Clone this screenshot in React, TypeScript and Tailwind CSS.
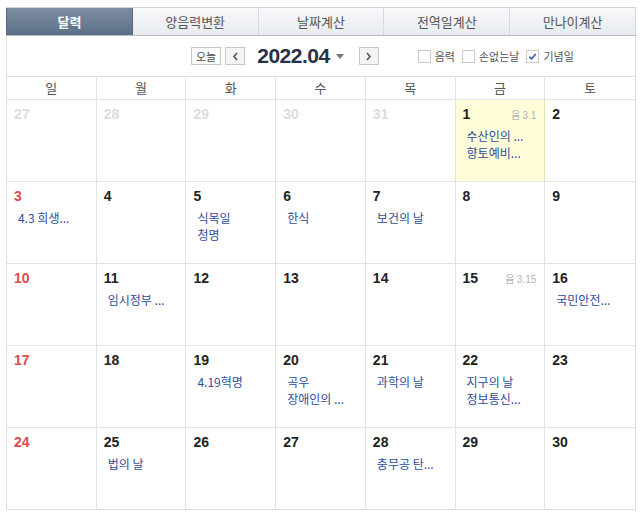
import React from "react";

type Day = {
  n: number;
  muted?: boolean;
  red?: boolean;
  today?: boolean;
  lunar?: string;
  events?: string[];
};

const tabs = ["달력", "양음력변환", "날짜계산", "전역일계산", "만나이계산"];
const weekdays = ["일", "월", "화", "수", "목", "금", "토"];

const weeks: Day[][] = [
  [
    { n: 27, muted: true },
    { n: 28, muted: true },
    { n: 29, muted: true },
    { n: 30, muted: true },
    { n: 31, muted: true },
    { n: 1, today: true, lunar: "3.1", events: ["수산인의 ...", "향토예비..."] },
    { n: 2 },
  ],
  [
    { n: 3, red: true, events: ["4.3 희생..."] },
    { n: 4 },
    { n: 5, events: ["식목일", "청명"] },
    { n: 6, events: ["한식"] },
    { n: 7, events: ["보건의 날"] },
    { n: 8 },
    { n: 9 },
  ],
  [
    { n: 10, red: true },
    { n: 11, events: ["임시정부 ..."] },
    { n: 12 },
    { n: 13 },
    { n: 14 },
    { n: 15, lunar: "3.15" },
    { n: 16, events: ["국민안전..."] },
  ],
  [
    { n: 17, red: true },
    { n: 18 },
    { n: 19, events: ["4.19혁명"] },
    { n: 20, events: ["곡우", "장애인의 ..."] },
    { n: 21, events: ["과학의 날"] },
    { n: 22, events: ["지구의 날", "정보통신..."] },
    { n: 23 },
  ],
  [
    { n: 24, red: true },
    { n: 25, events: ["법의 날"] },
    { n: 26 },
    { n: 27 },
    { n: 28, events: ["충무공 탄..."] },
    { n: 29 },
    { n: 30 },
  ],
];

const kr = { fontFamily: '"Noto Sans CJK KR", "Noto Sans", sans-serif' };
const num = { fontFamily: '"Liberation Sans", Arial, sans-serif' };

function Check({ checked, label }: { checked?: boolean; label: string }) {
  return (
    <label className="flex items-center gap-[4px] text-[11px] text-[#555]">
      <span className="w-[13px] h-[13px] border border-[#c9c9c9] bg-white flex items-center justify-center">
        {checked && (
          <svg width="9" height="9" viewBox="0 0 10 10">
            <path d="M1.5 5.2 L4 7.6 L8.6 2.2" fill="none" stroke="#2b5fb3" strokeWidth="1.8" />
          </svg>
        )}
      </span>
      {label}
    </label>
  );
}

function Cell({ d, last }: { d: Day; last: boolean }) {
  const color = d.muted ? "text-[#dcdcdc]" : d.red ? "text-[#e04a4a]" : "text-[#222]";
  return (
    <div
      className={`h-[82px] px-[7px] pt-[4px] border-t border-[#e3e3e3] ${
        last ? "" : "border-r"
      } ${d.today ? "bg-[#fffed8] border-r-[#e4e3b4]" : ""}`}
    >
      <div className="flex items-start justify-between">
        <span className={`text-[14px] font-bold ${color}`} style={num}>
          {d.n}
        </span>
        {d.lunar && (
          <span className="text-[10px] text-[#b5b5b5] mt-[3px] mr-[1px]" style={kr}>
            음 <span style={num}>{d.lunar}</span>
          </span>
        )}
      </div>
      {d.events && (
        <div className="pl-[4px] mt-[2px] leading-[17px] text-[12px] text-[#2d4d9c]" style={kr}>
          {d.events.map((e) => (
            <div key={e} className="whitespace-nowrap">
              {e}
            </div>
          ))}
        </div>
      )}
    </div>
  );
}

export default function App() {
  return (
    <div className="w-[642px] h-[515px] bg-white pt-[7px] px-[6px]" style={kr}>
      <div className="flex w-[630px] h-[29px] border-t border-[#cfd3d9] border-b border-b-[#b9bec6]">
        {tabs.map((t, i) => (
          <div
            key={t}
            className={`flex-1 flex items-center justify-center text-[13px] ${
              i === 0
                ? "bg-gradient-to-b from-[#7c8ca2] to-[#5d6f88] text-white font-bold border-x border-[#56677e]"
                : "bg-gradient-to-b from-[#f7f8fa] to-[#e8ebef] text-[#555] border-r border-[#d6d9de]"
            }`}
          >
            {t}
          </div>
        ))}
      </div>
      <div className="w-[630px] border-x border-b border-[#dedede]">
        <div className="h-[40px] flex items-center pl-[184px]">
          <button className="h-[18px] px-[4px] border border-[#c8c8c8] bg-white text-[11px] text-[#444] leading-none">
            오늘
          </button>
          <button className="ml-[4px] w-[20px] h-[18px] border border-[#c8c8c8] bg-[#f4f4f4] flex items-center justify-center">
            <svg width="7" height="9" viewBox="0 0 7 9">
              <path d="M5 1 L2 4.5 L5 8" fill="none" stroke="#555" strokeWidth="1.6" />
            </svg>
          </button>
          <span
            className="ml-[12px] text-[21px] font-bold text-[#2b2f48] tracking-[-0.5px]"
            style={{ fontFamily: '"Liberation Sans", Arial, sans-serif' }}
          >
            2022.04
          </span>
          <svg className="ml-[6px]" width="8" height="5" viewBox="0 0 8 5">
            <path d="M0 0 L8 0 L4 5 Z" fill="#777" />
          </svg>
          <button className="ml-[15px] w-[20px] h-[18px] border border-[#c8c8c8] bg-[#f4f4f4] flex items-center justify-center">
            <svg width="7" height="9" viewBox="0 0 7 9">
              <path d="M2 1 L5 4.5 L2 8" fill="none" stroke="#555" strokeWidth="1.6" />
            </svg>
          </button>
          <div className="ml-[39px] flex items-center gap-[7px]">
            <Check label="음력" />
            <Check label="손없는날" />
            <Check checked label="기념일" />
          </div>
        </div>
        <div className="grid grid-cols-7 border-t border-[#dedede]">
          {weekdays.map((w, i) => (
            <div
              key={w}
              className={`h-[22px] flex items-center justify-center text-[13px] text-[#555] ${
                i < 6 ? "border-r border-[#e3e3e3]" : ""
              }`}
            >
              {w}
            </div>
          ))}
          {weeks.flat().map((d, i) => (
            <Cell key={i} d={d} last={i % 7 === 6} />
          ))}
        </div>
      </div>
    </div>
  );
}
